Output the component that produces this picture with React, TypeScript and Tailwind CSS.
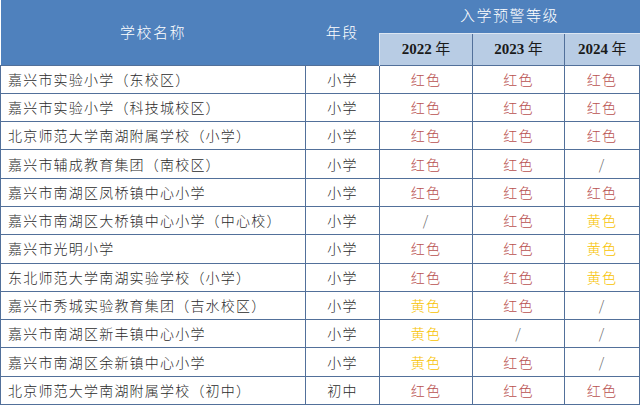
type Level = "红色" | "黄色" | "/";

interface Row {
  name: string;
  stage: string;
  levels: [Level, Level, Level];
}

const rows: Row[] = [
  { name: "嘉兴市实验小学（东校区）", stage: "小学", levels: ["红色", "红色", "红色"] },
  { name: "嘉兴市实验小学（科技城校区）", stage: "小学", levels: ["红色", "红色", "红色"] },
  { name: "北京师范大学南湖附属学校（小学）", stage: "小学", levels: ["红色", "红色", "红色"] },
  { name: "嘉兴市辅成教育集团（南校区）", stage: "小学", levels: ["红色", "红色", "/"] },
  { name: "嘉兴市南湖区凤桥镇中心小学", stage: "小学", levels: ["红色", "红色", "红色"] },
  { name: "嘉兴市南湖区大桥镇中心小学（中心校）", stage: "小学", levels: ["/", "红色", "黄色"] },
  { name: "嘉兴市光明小学", stage: "小学", levels: ["红色", "红色", "黄色"] },
  { name: "东北师范大学南湖实验学校（小学）", stage: "小学", levels: ["红色", "红色", "黄色"] },
  { name: "嘉兴市秀城实验教育集团（吉水校区）", stage: "小学", levels: ["黄色", "红色", "/"] },
  { name: "嘉兴市南湖区新丰镇中心小学", stage: "小学", levels: ["黄色", "/", "/"] },
  { name: "嘉兴市南湖区余新镇中心小学", stage: "小学", levels: ["黄色", "红色", "/"] },
  { name: "北京师范大学南湖附属学校（初中）", stage: "初中", levels: ["红色", "红色", "红色"] },
];

function LevelCell({ level }: { level: Level }) {
  const color =
    level === "红色" ? "text-[#b9514f]" : level === "黄色" ? "text-[#f7c200]" : "text-[#666]";
  return (
    <td className={`border border-[#52709a] text-center ${color}`}>
      {level}
    </td>
  );
}

export default function App() {
  return (
    <div
      className="w-[640px] h-[409px] bg-white overflow-hidden"
      style={{ fontFamily: '"Noto Sans CJK SC", sans-serif' }}
    >
      <table className="table-fixed border-collapse w-[639px] text-[14px] font-light tracking-[1.2px]">
        <colgroup>
          <col className="w-[305px]" />
          <col className="w-[74px]" />
          <col className="w-[93px]" />
          <col className="w-[92px]" />
          <col className="w-[75px]" />
        </colgroup>
        <thead>
          <tr className="h-[33px] bg-[#4f81bd] text-white text-[15px]">
            <th rowSpan={2} className="font-light tracking-[1.5px]">
              学校名称
            </th>
            <th rowSpan={2} className="font-light tracking-[1.5px]">
              年段
            </th>
            <th colSpan={3} className="font-light tracking-[1.5px] pb-[2px]">
              入学预警等级
            </th>
          </tr>
          <tr className="h-[32px] bg-[#b8cce4] text-[#1a1a1a]">
            {["2022", "2023", "2024"].map((y) => (
              <th
                key={y}
                className="font-normal border-t border-t-[#dce6f2] border-l border-[#52709a] first:border-l-[#dce6f2] text-[15px] tracking-normal"
              >
                <span className="font-bold" style={{ fontFamily: '"Liberation Serif", serif' }}>
                  {y}
                </span>{" "}
                年
              </th>
            ))}
          </tr>
        </thead>
        <tbody className="text-[#2b2b2b]">
          {rows.map((r) => (
            <tr key={r.name} className="h-[28.3px]">
              <td className="border border-[#52709a] pl-[7px] whitespace-nowrap">{r.name}</td>
              <td className="border border-[#52709a] text-center">{r.stage}</td>
              {r.levels.map((l, i) => (
                <LevelCell key={i} level={l} />
              ))}
            </tr>
          ))}
        </tbody>
      </table>
    </div>
  );
}
